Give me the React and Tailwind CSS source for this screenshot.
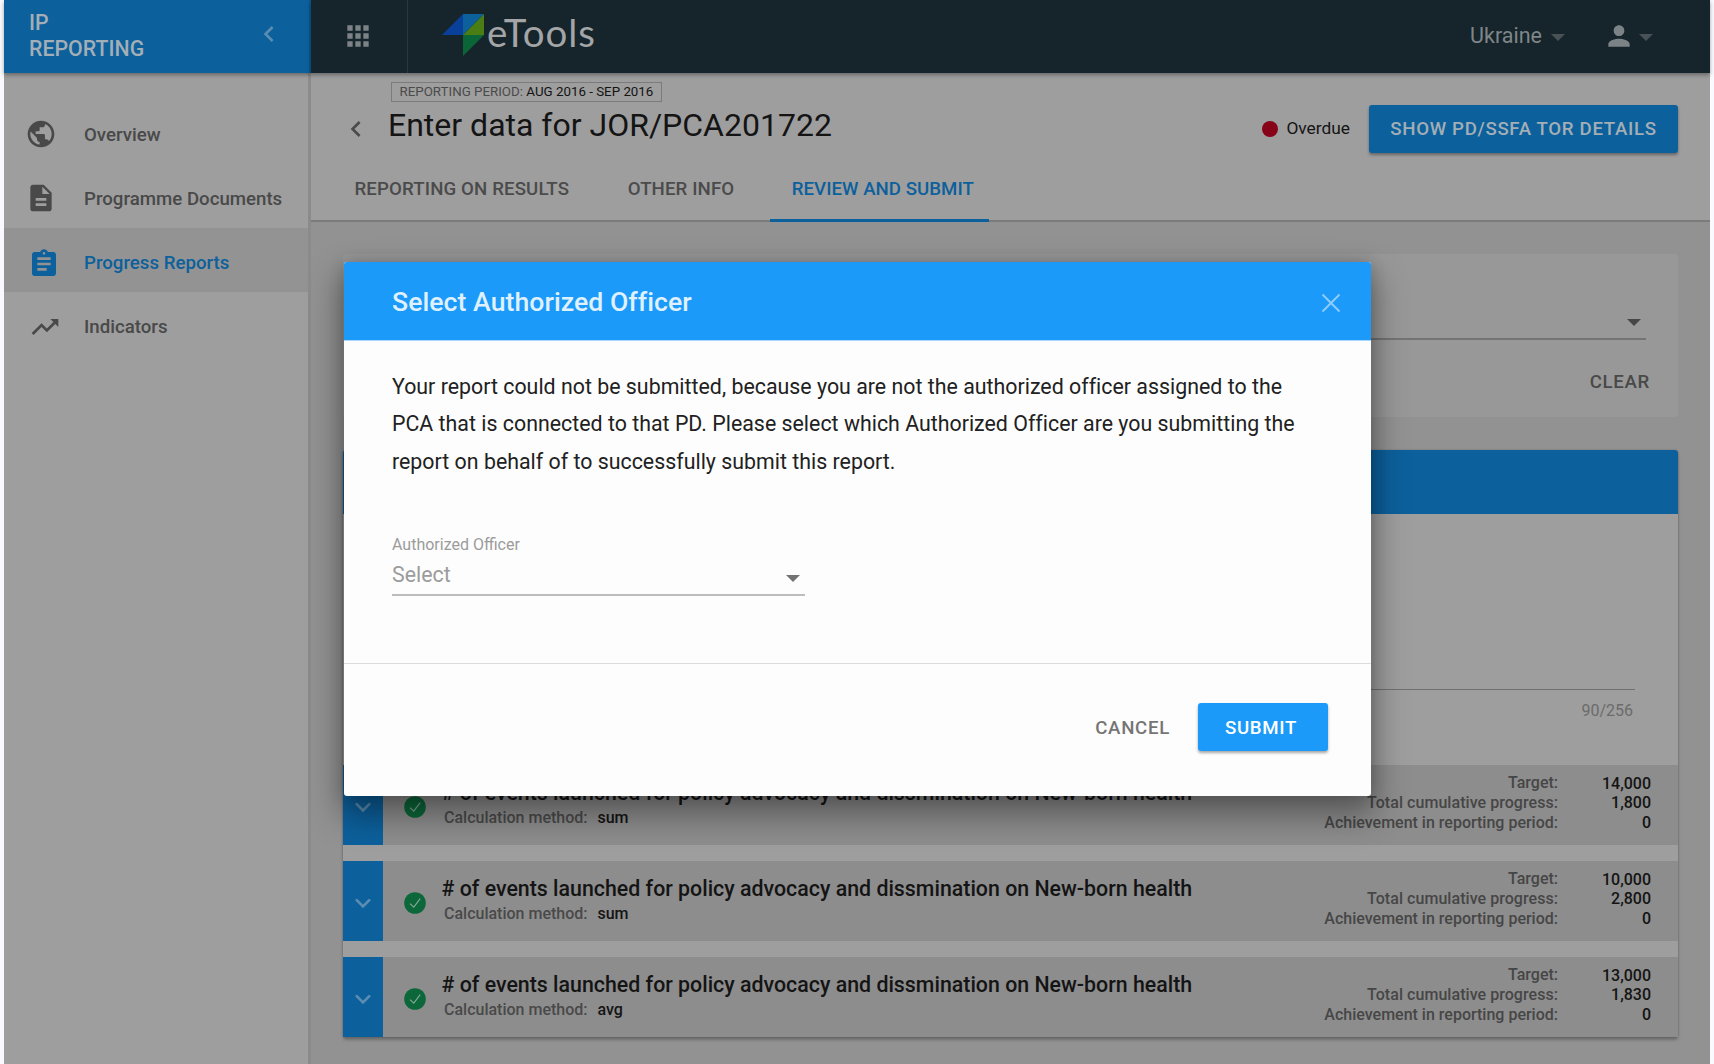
import React from 'react';
import { MdPublic, MdDescription, MdAssignment, MdTrendingUp, MdChevronLeft, MdApps, MdPerson, MdExpandMore } from 'react-icons/md';

const NAV = [
  { label: 'Overview', Icon: MdPublic, iconClass: 'ml-[21px] mr-[27px]' },
  { label: 'Programme Documents', Icon: MdDescription, iconClass: 'ml-[21px] mr-[27px]' },
  { label: 'Progress Reports', Icon: MdAssignment, iconClass: 'ml-6 mr-6 mt-1', active: true },
  { label: 'Indicators', Icon: MdTrendingUp, iconClass: 'ml-[25px] mr-[23px] mt-0.5' },
];

const INDICATORS = [
  { method: 'sum', target: '14,000', progress: '1,800', achieved: '0' },
  { method: 'sum', target: '10,000', progress: '2,800', achieved: '0' },
  { method: 'avg', target: '13,000', progress: '1,830', achieved: '0' },
];

function Caret({ className }) {
  return (
    <svg viewBox="0 0 14 7" className={`h-[7px] w-[14px] shrink-0 ${className}`} fill="currentColor">
      <path d="M0 0h14L7 7z" />
    </svg>
  );
}

function Logo() {
  return (
    <svg viewBox="0 0 42 42" className="ml-[34px] mt-[14px] h-[42px] w-[42px] shrink-0">
      <path d="M0 21L21 0v21z" fill="#08409a" />
      <path d="M21 0h21L21 21z" fill="#0c609c" />
      <path d="M42 0v21H21z" fill="#4a7d13" />
      <path d="M21 21h21L21 42z" fill="#0a6637" />
    </svg>
  );
}

function Sidebar() {
  return (
    <aside className="flex w-[307px] shrink-0 flex-col">
      <div className="z-10 flex h-[73px] items-start justify-between border-r-2 border-[#0b568c] bg-[#0c609c] pl-[25px] pr-6 text-[21.33px] font-medium leading-[25.5px] text-[#a3aeb6] shadow-[0_2px_4px_rgba(0,0,0,0.35)]">
        <div className="w-32 pt-[10px]">IP REPORTING</div>
        <MdChevronLeft className="mt-[18px] h-8 w-8 text-[#5b8cb1]" />
      </div>
      <nav className="flex-1 border-r-[3px] border-[#8b8b8b] bg-[#9e9e9e] pt-[27px]">
        {NAV.map(({ label, Icon, iconClass, active }) => (
          <div
            key={label}
            className={`flex h-16 items-center pt-1 text-[18.67px] font-medium ${active ? 'bg-[#939393] text-[#0c609c]' : 'text-[#494949]'}`}
          >
            <Icon className={`h-8 w-8 shrink-0 ${iconClass}`} />
            <span className="pt-px">{label}</span>
          </div>
        ))}
      </nav>
    </aside>
  );
}

function TopBar() {
  return (
    <header className="z-10 flex h-[73px] shrink-0 bg-[#16242b] shadow-[0_2px_4px_rgba(0,0,0,0.35)]">
      <div className="flex w-[97px] items-center border-r border-[#2a373d] pl-[31px] text-[#7c8386]">
        <MdApps className="mb-[2px] h-8 w-8" />
      </div>
      <Logo />
      <div className="ml-[3px] mt-[9px] font-[Lato,sans-serif] text-[38.5px] leading-[46px] tracking-[0.9px] text-[#a3a5a6]">eTools</div>
      <div className="ml-auto flex items-center pb-[1px] pr-[57px]">
        <span className="pt-px text-[21.5px] text-[#7f8689]">Ukraine</span>
        <Caret className="ml-[9px] mt-[3px] text-[#475156]" />
        <MdPerson className="ml-[38px] h-8 w-8 text-[#7c8386]" />
        <Caret className="ml-1 mt-[3px] text-[#475156]" />
      </div>
    </header>
  );
}

function PageHeader() {
  return (
    <section className="flex h-[149px] shrink-0 flex-col border-b-2 border-[#7b7b7b] bg-[#9e9e9e]">
      <div className="flex h-[86px] shrink-0 pr-8">
        <MdChevronLeft className="ml-[29px] mt-[40px] h-8 w-8 text-[#4b4b4b]" />
        <div className="ml-[18.5px] pt-[9px]">
          <div className="flex h-5 w-fit items-center border border-[#7b7b7b] px-2 text-[13.33px] leading-[18px] text-[#4b4b4b]">
            <span>
              REPORTING PERIOD: <span className="text-[#141414]">AUG 2016 - SEP 2016</span>
            </span>
          </div>
          <h1 className="-ml-[2.5px] mt-1 text-[32px] leading-[38px] text-[#141414]">Enter data for JOR/PCA201722</h1>
        </div>
        <div className="ml-auto mt-8 flex h-12 items-center">
          <span className="h-4 w-4 rounded-full bg-[#870418]" />
          <span className="ml-2 text-[17.33px] text-[#141414]">Overdue</span>
          <button className="ml-[19px] h-12 w-[309px] rounded-[3px] bg-[#0c609c] text-[18.67px] font-medium tracking-[0.66px] text-[#a3aeb6] shadow-[0_2px_3px_rgba(0,0,0,0.35)]">
            SHOW PD/SSFA TOR DETAILS
          </button>
        </div>
      </div>
      <div className="-mb-0.5 flex h-[63px] shrink-0 text-[18.67px] font-medium leading-[22px] text-[#4b4b4b]">
        <div className="ml-[43.5px] pt-[19px] tracking-[0.12px]">REPORTING ON RESULTS</div>
        <div className="ml-[58.5px] pt-[19px] tracking-[0.1px]">OTHER INFO</div>
        <div className="ml-9 h-[63px] w-[219px] border-b-[3px] border-[#0c609c] pl-[21.5px] pt-[19px] tracking-[0.03px] text-[#0c609c]">REVIEW AND SUBMIT</div>
      </div>
    </section>
  );
}

function FilterPanel() {
  return (
    <section className="flex h-[163px] flex-col items-end rounded-[3px] bg-[#989898]">
      <div className="mr-8 flex h-[86px] w-[1260px] items-end justify-end border-b-2 border-[#747474] pb-3 pr-[5px]">
        <Caret className="text-[#464646]" />
      </div>
      <div className="mr-[28px] mt-[31px] text-[18.67px] font-medium leading-[22px] tracking-[0.67px] text-[#494949]">CLEAR</div>
    </section>
  );
}

function IndicatorRow({ method, target, progress, achieved }) {
  return (
    <div className="flex h-20 bg-[#8d8d8d] font-medium">
      <div className="flex w-10 items-center justify-center bg-[#0c609c] pt-[3px] text-[#5b8cb1]">
        <MdExpandMore className="h-8 w-8" />
      </div>
      <div className="flex items-center pl-[20.5px] pt-[3px]">
        <svg viewBox="0 0 22 22" className="h-[22px] w-[22px]">
          <circle cx="11" cy="11" r="10.8" fill="#0c673a" />
          <path d="M6 11.6l3.8 3.6 6.4-8.6" fill="none" stroke="#7fa893" strokeWidth="1.15" />
        </svg>
      </div>
      <div className="ml-[16px] pt-[15px]">
        <div className="text-[21.33px] leading-[26px] tracking-[0.01px] text-[#141414]"># of events launched for policy advocacy and dissmination on New-born health</div>
        <div className="ml-[2.5px] pt-px text-base leading-[22px] text-[#494949]">
          Calculation method: <span className="ml-[6px] text-[#141414]">{method}</span>
        </div>
      </div>
      <div className="ml-auto pt-2 text-right text-base leading-5 text-[#464646]">
        <div>Target:</div>
        <div className="tracking-[0.05px]">Total cumulative progress:</div>
        <div>Achievement in reporting period:</div>
      </div>
      <div className="mr-[27px] w-[93px] pt-[9px] text-right text-base leading-5 text-[#141414]">
        <div className="h-[19px]">{target}</div>
        <div>{progress}</div>
        <div>{achieved}</div>
      </div>
    </div>
  );
}

function ReportCard() {
  return (
    <section className="mt-[33px] rounded-[3px] bg-[#9e9e9e] shadow-[0_3px_3px_rgba(0,0,0,0.25),0_0_2px_rgba(0,0,0,0.25)]">
      <div className="h-16 rounded-t-[3px] bg-[#0c609c]" />
      <div className="flex h-[251px] flex-col items-end pr-[43px]">
        <div className="h-[176px] w-[1240px] border-b border-[#707070]" />
        <div className="mr-[2px] mt-[11px] text-base leading-5 text-[#6b6b6b]">90/256</div>
      </div>
      <div className="flex flex-col gap-4">
        {INDICATORS.map((row) => (
          <IndicatorRow key={row.target} {...row} />
        ))}
      </div>
    </section>
  );
}

function OfficerDialog() {
  return (
    <div
      role="dialog"
      className="absolute left-[344px] top-[262px] z-20 flex h-[534px] w-[1027.4px] flex-col rounded-[3px] bg-[#fdfdfd] shadow-[0_16px_32px_4px_rgba(0,0,0,0.36),0_0_16px_rgba(0,0,0,0.16)]"
    >
      <div className="flex h-[78px] items-center justify-between rounded-t-[3px] bg-[#1b9afa] pl-12 pr-[31px]">
        <h2 className="pt-[1px] text-[26.67px] font-medium tracking-[0.03px] text-[#dff0ff]">Select Authorized Officer</h2>
        <svg viewBox="0 0 18 18" className="mt-1 h-[18px] w-[18px] overflow-visible text-[#8fcbfd]" stroke="currentColor" strokeWidth="2">
          <path d="M0.5 0.5l17 17M17.5 0.5l-17 17" />
        </svg>
      </div>
      <div className="h-[324px] border-b border-t border-b-[#dcdcdc] border-t-[#a9d7fd] px-12 pt-[27px]">
        <p className="w-[920px] text-[21.33px] leading-[37.33px] tracking-[0.016px] text-[#212121]">
          Your report could not be submitted, because you are not the authorized officer assigned to the PCA that is connected to that PD. Please select which Authorized Officer are you submitting the report on behalf of to successfully submit this report.
        </p>
        <div className="mt-[55px] w-[413px] border-b-2 border-[#bdbdbd] text-[#9b9b9b]">
          <div className="text-base leading-5">Authorized Officer</div>
          <div className="flex h-[39px] items-start justify-between pr-[5px] pt-[6px]">
            <span className="text-[21.33px] leading-[28px]">Select</span>
            <Caret className="mt-[14px] text-[#737373]" />
          </div>
        </div>
      </div>
      <div className="flex justify-end pr-[43.4px] pt-[39px] text-[18.67px] font-medium tracking-[0.7px]">
        <button className="mr-[28px] h-12 pt-px text-[#757575]">CANCEL</button>
        <button className="h-12 w-[130px] rounded-[3px] bg-[#1b9afa] pr-1 pt-px text-white shadow-[0_2px_3px_rgba(0,0,0,0.35)]">SUBMIT</button>
      </div>
    </div>
  );
}

export default function App() {
  return (
    <div className="relative flex h-[1064px] w-[1714px] overflow-hidden bg-[#fafafe] px-1 font-[Roboto,sans-serif]">
      <Sidebar />
      <div className="flex min-w-0 flex-1 flex-col bg-[#929292]">
        <TopBar />
        <PageHeader />
        <main className="px-8 pt-8">
          <FilterPanel />
          <ReportCard />
        </main>
      </div>
      <OfficerDialog />
    </div>
  );
}
